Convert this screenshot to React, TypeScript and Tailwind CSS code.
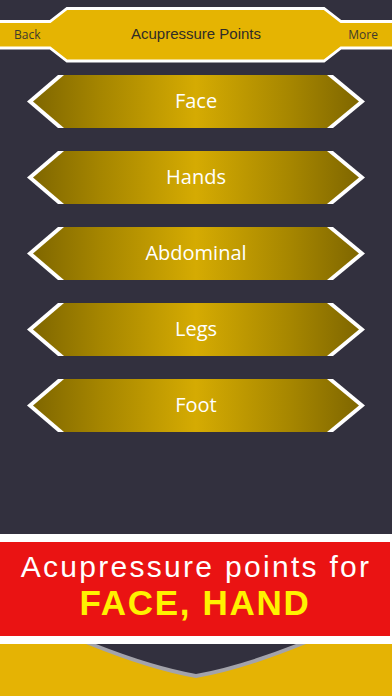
import React from "react";

const regions = ["Face", "Hands", "Abdominal", "Legs", "Foot"];

const HeaderBand: React.FC = () => (
  <div className="relative h-[68px] w-full">
    {/* band shape */}
    <svg
      className="absolute inset-0"
      width="392"
      height="68"
      viewBox="0 0 392 68"
    >
      <path
        d="M -4 21.5 L 50 21.5 L 67 8.5 L 324 8.5 L 341 21.5 L 396 21.5 L 396 48 L 341 48 L 324 61 L 67 61 L 50 48 L -4 48 Z"
        fill="#e5b402"
        stroke="#ffffff"
        strokeWidth="2.8"
      />
    </svg>
    <div className="relative flex h-full items-center justify-between px-[14px] pt-[1px]">
      <span className="w-[40px] font-['Open_Sans',sans-serif] text-[12px] text-[#3e3a2c]">
        Back
      </span>
      <span className="font-['Liberation_Sans',Arial,sans-serif] text-[15px] text-[#2f2c28]">
        Acupressure Points
      </span>
      <span className="w-[40px] text-right font-['Open_Sans',sans-serif] text-[12px] text-[#3e3a2c]">
        More
      </span>
    </div>
  </div>
);

const RegionButton: React.FC<{ label: string }> = ({ label }) => (
  <button className="mx-[27px] block h-[53px] w-[338px] bg-white [clip-path:polygon(31px_0,calc(100%-32px)_0,100%_50%,calc(100%-32px)_100%,31px_100%,0_50%)]">
    <div className="flex h-full w-full items-center justify-center bg-[linear-gradient(90deg,#7c6400_0%,#a68600_22%,#d5ab02_50%,#a68600_78%,#7c6400_100%)] [clip-path:polygon(37px_0,calc(100%-38px)_0,calc(100%-6px)_50%,calc(100%-38px)_100%,37px_100%,6px_50%)]">
      <span className="-mt-[1px] font-['Open_Sans',sans-serif] text-[20px] text-white">
        {label}
      </span>
    </div>
  </button>
);

export default function App() {
  return (
    <div className="flex h-[696px] w-[392px] flex-col overflow-hidden bg-[#32303e]">
      <HeaderBand />

      {/* body regions */}
      <div className="mt-[7px] flex flex-col gap-[23px]">
        {regions.map((r) => (
          <RegionButton key={r} label={r} />
        ))}
      </div>

      <div className="flex-1" />

      {/* promo banner */}
      <div className="flex h-[110px] flex-col items-center justify-center border-y-[8px] border-r-2 border-white bg-[#ea1313] pb-[6px]">
        <p className="pl-[2px] font-['Liberation_Sans',Arial,sans-serif] text-[30px] leading-[34px] tracking-[2.3px] text-white">
          Acupressure points for
        </p>
        <p className="font-['Liberation_Sans',Arial,sans-serif] text-[35px] font-bold leading-[38px] tracking-[1.7px] text-[#fff200]">
          FACE, HAND
        </p>
      </div>

      <div className="h-[52px] bg-[#e5b304]">
        <svg width="392" height="52" viewBox="0 0 392 52">
          <path d="M 86 0 Q 150 26 196 34 Q 242 26 306 0 Z" fill="#a3a3aa" />
          <path d="M 96 0 Q 152 22 196 30 Q 240 22 296 0 Z" fill="#32303e" />
        </svg>
      </div>
    </div>
  );
}
